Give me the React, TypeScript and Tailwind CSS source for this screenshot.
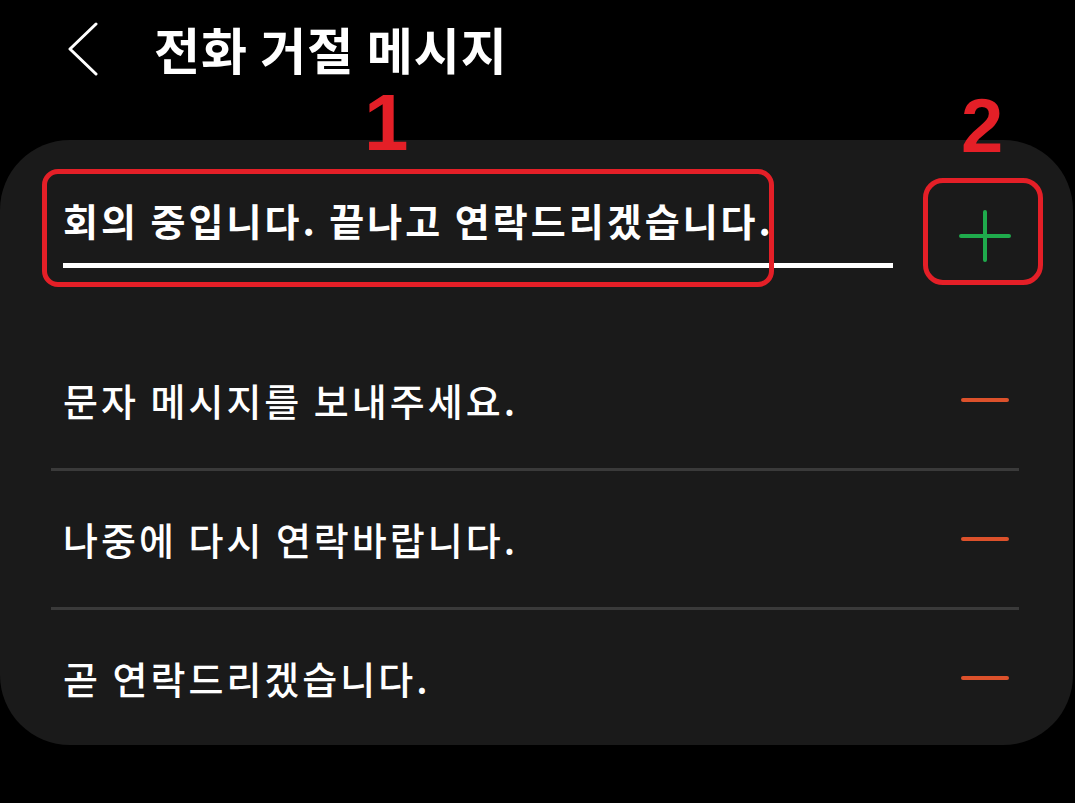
import React from "react";

const messages = [
  "문자 메시지를 보내주세요.",
  "나중에 다시 연락바랍니다.",
  "곧 연락드리겠습니다.",
];

export default function App() {
  return (
    <div
      className="relative w-[1075px] h-[803px] overflow-hidden bg-black text-white"
      style={{ fontFamily: '"Noto Sans CJK KR", "Noto Sans", sans-serif' }}
    >
      {/* Header */}
      <div className="flex items-center h-[100px]">
        <svg width="30" height="54" viewBox="0 0 30 54" className="ml-[68px] mt-[-2px]" fill="none">
          <path d="M28 2 L2 27 L28 52" stroke="white" strokeWidth="3" strokeLinecap="round" strokeLinejoin="round" />
        </svg>
        <h1 className="ml-[56px] mt-[-4px] text-[50px] font-bold leading-none tracking-[1px]">전화 거절 메시지</h1>
      </div>

      {/* Card */}
      <div className="mt-[40px] w-[1073px] h-[605px] rounded-[70px] bg-[#1a1a1a] pl-[51px] pr-[54px] overflow-hidden">
        {/* New message input */}
        <div className="flex items-start pt-[56px]">
          <div className="w-[842px] pl-[12px]">
            <p className="text-[38px] font-bold leading-[48px] tracking-[3px] whitespace-nowrap">회의 중입니다. 끝나고 연락드리겠습니다.</p>
            <div className="mt-[19px] h-[5px] bg-white" />
          </div>
          <div className="flex items-center justify-center w-[52px] h-[52px] ml-[66px] mt-[14px]">
            <svg width="52" height="52" viewBox="0 0 52 52" fill="none">
              <path d="M26 2 V50 M2 26 H50" stroke="#1fab4c" strokeWidth="4" strokeLinecap="round" />
            </svg>
          </div>
        </div>

        {/* Saved messages */}
        <div className="mt-[64px]">
          {messages.map((m, i) => (
            <div key={m}>
              {i > 0 && <div className="h-[3px] bg-[#3a3a3a]" />}
              <div className="flex items-center justify-between h-[136px] pl-[12px] pr-[10px]">
                <span className="text-[38px] font-medium leading-none tracking-[3px]">{m}</span>
                <span className="block w-[48px] h-[4px] rounded-full bg-[#dc512b]" />
              </div>
            </div>
          ))}
        </div>
      </div>

      {/* Annotations */}
      <div className="absolute left-[42px] top-[169px] w-[732px] h-[118px] rounded-[16px] border-[5px] border-[#e41f27]" />
      <div className="absolute left-[923px] top-[178px] w-[120px] h-[107px] rounded-[20px] border-[5px] border-[#e41f27]" />
      <span
        className="absolute left-[364px] top-[93px] text-[80px] font-bold leading-[60px] text-[#e41f27]"
        style={{ fontFamily: '"Liberation Sans", Arial, sans-serif' }}
      >
        1
      </span>
      <span
        className="absolute left-[961px] top-[98px] text-[76px] font-bold leading-[56px] text-[#e41f27]"
        style={{ fontFamily: '"Liberation Sans", Arial, sans-serif' }}
      >
        2
      </span>
    </div>
  );
}
